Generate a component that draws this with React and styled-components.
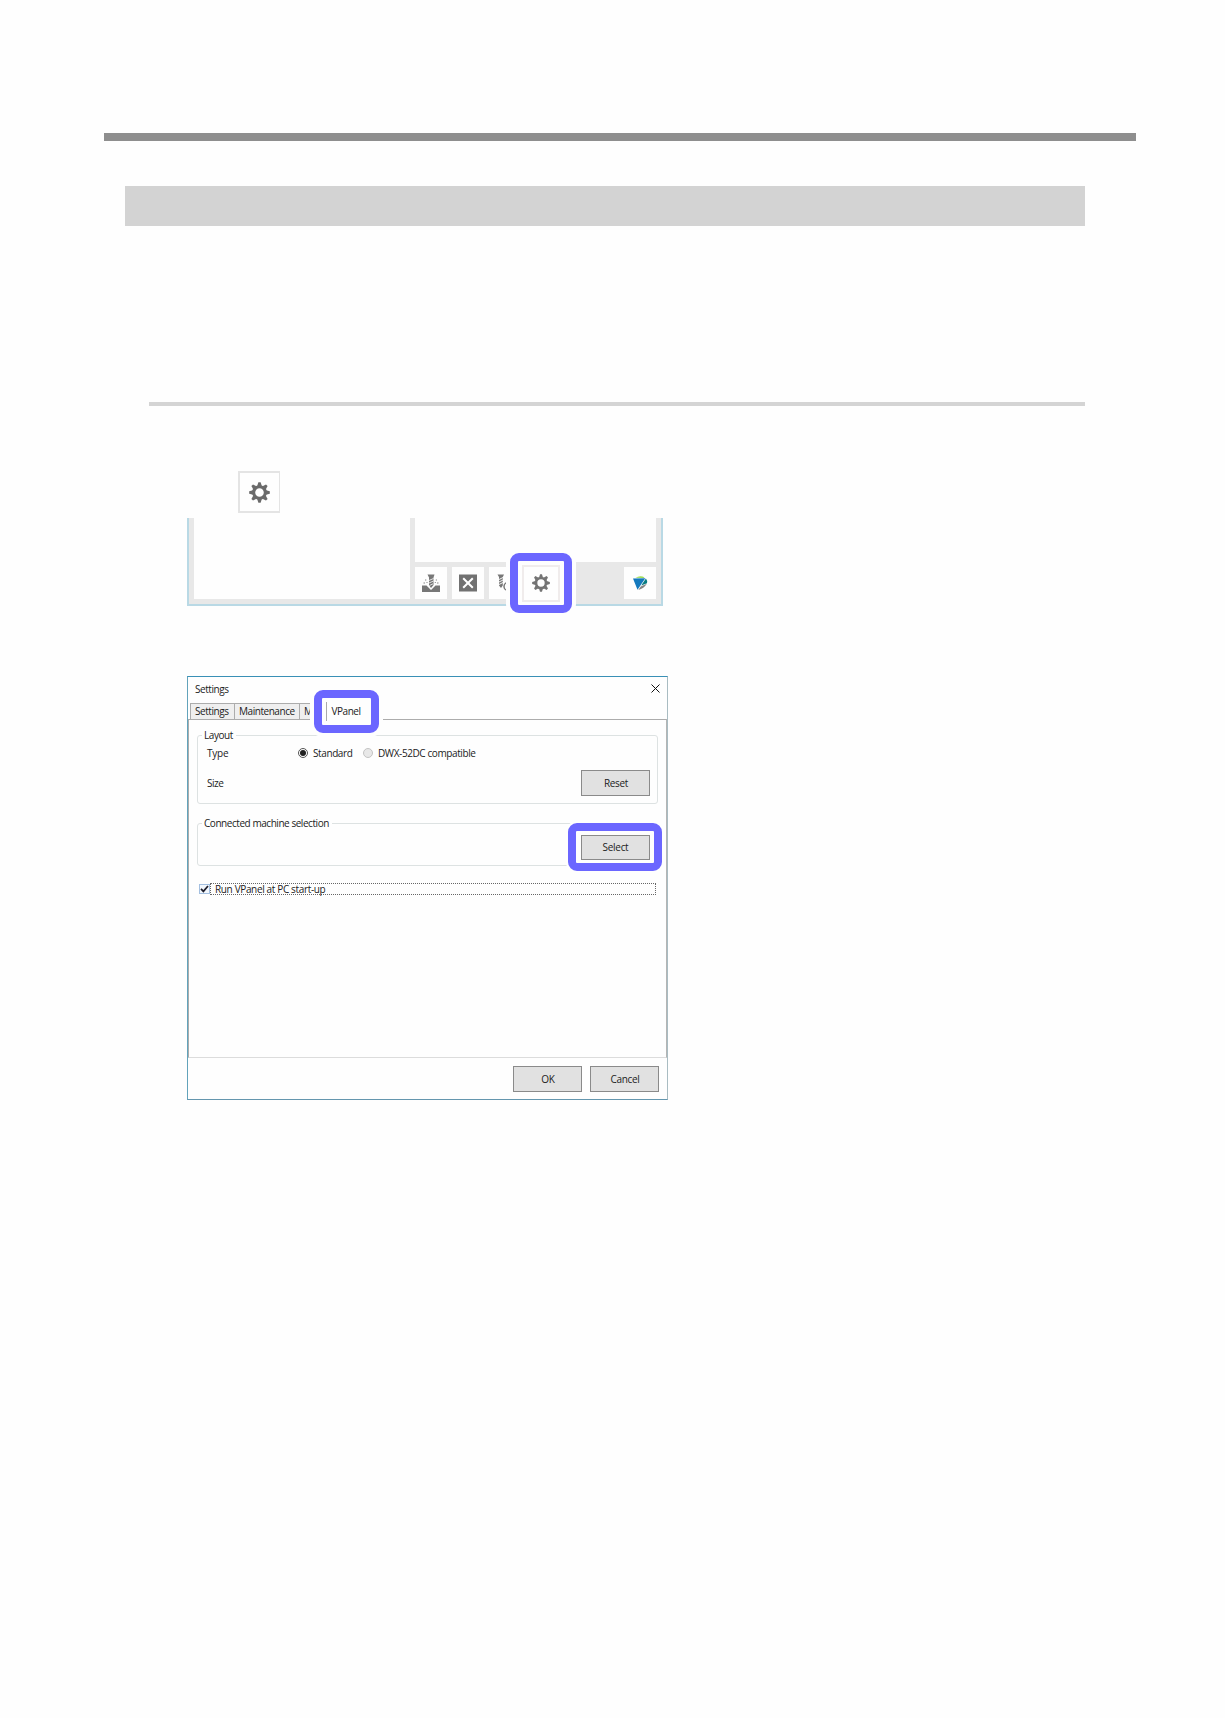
import React, { useState } from 'react';
import styled, { createGlobalStyle } from 'styled-components'

const GlobalStyle = createGlobalStyle`
    * {
        box-sizing: border-box;
    }
    body {
        margin: 0;
        background-color: #fefefe;
    }
`

const Page = styled.main`
    width: 1225px;
    height: 1718px;
    padding: 133px 89px 0 104px;
    font-family: "Open Sans", "Noto Sans", sans-serif;
    font-size: 10px;
    line-height: 14px;
    letter-spacing: -0.45px;
    color: #222;
`
const HeaderRule = styled.div`
    height: 8px;
    background-color: #8e8e8e;
`
const Article = styled.div`
    padding: 45px 51px 0 21px;
`
const Heading = styled.div`
    height: 40px;
    background-color: #d3d3d3;
`
const SectionRule = styled.div`
    height: 4px;
    margin: 176px 0 0 24px;
    background-color: #d4d4d4;
`
const Steps = styled.div`
    display: flex;
    flex-direction: column;
    align-items: flex-start;
    padding: 65px 0 0 62px;
`
const GearTile = styled.div`
    display: flex;
    align-items: center;
    justify-content: center;
    width: 42px;
    height: 42px;
    margin: 0 0 5px 51px;
    border: 2px solid #e4e4e4;
    border-right-width: 1px;
    background-color: #fefefe;
`

/* machine panel */
const Machine = styled.div`
    position: relative;
    display: flex;
    gap: 5px;
    width: 476px;
    height: 88px;
    margin-bottom: 70px;
    padding: 0 5px 5px;
    background-color: #e8e8e8;
    border: 2px solid #b9d9e5;
    border-top: none;
`
const MachineList = styled.div`
    width: 216px;
    background-color: #fefefe;
`
const MachineRight = styled.div`
    flex: 1;
    display: flex;
    flex-direction: column;
    gap: 5px;
`
const MachineView = styled.div`
    height: 44px;
    background-color: #fefefe;
`
const Toolbar = styled.div`
    display: flex;
    gap: 5px;
    height: 32px;
`
const Tool = styled.div`
    display: flex;
    align-items: center;
    justify-content: center;
    width: 32px;
    height: 32px;
    margin-left: ${(props) => (props.$last ? 'auto' : 0)};
    background-color: #fefefe;
`

/* coloured frame with a white gap around it, lies over the screens */
const Highlight = styled.div`
    position: absolute;
    left: ${(props) => props.$x}px;
    top: ${(props) => props.$y}px;
    width: ${(props) => props.$w}px;
    height: ${(props) => props.$h}px;
    display: flex;
    align-items: center;
    justify-content: center;
    border: 8px solid #6b66ff;
    border-radius: 9px;
    background-color: #fefefe;
    box-shadow: 0 0 0 ${(props) => props.$gap ?? 4}px #fefefe;
`
const ActiveTool = styled.div`
    display: flex;
    align-items: center;
    justify-content: center;
    width: 38px;
    height: 37px;
    border: 2px solid #f0ecec;
`

/* settings window */
const Window = styled.div`
    position: relative;
    display: flex;
    flex-direction: column;
    width: 481px;
    height: 424px;
    border: 1px solid #62a3bb;
    border-top-color: #3990b6;
    border-bottom-color: #6496ae;
    border-right-color: #a9bcc2;
    background-color: #fefefe;
`
const TitleBar = styled.div`
    display: flex;
    justify-content: space-between;
    height: 26px;
    padding: 5px 7px 0;

    svg {
        margin-top: 2px;
    }
`
const Tabs = styled.div`
    display: flex;
    height: 16px;
    padding-left: 2px;
`
const Tab = styled.div`
    width: ${(props) => props.$w}px;
    padding-left: 4px;
    border: 1px solid #acacac;
    border-bottom: none;
    border-left-width: ${(props) => (props.$first ? 1 : 0)}px;
    background-color: #efefef;
    line-height: 15px;
    overflow: hidden;
`
const ActiveTab = styled.div`
    width: 45px;
    height: 19px;
    margin-left: 3px;
    padding: 2px 0 0 5px;
    border-left: 1px solid #aaa;
`
const TabPane = styled.div`
    flex: 1;
    padding: 15px 8px 0 8px;
    border: 1px solid #acacac;
    border-right: 1px solid #b5b5b5;
    border-bottom-color: #dcdcdc;
`
const Group = styled.div`
    display: flex;
    flex-direction: column;
    height: ${(props) => props.$h}px;
    margin-bottom: ${(props) => props.$after}px;
    padding: 0 7px 0 9px;
    border: 1px solid #dde2e2;
    border-radius: 3px;
`
const Legend = styled.div`
    align-self: flex-start;
    height: 14px;
    margin: -8px 0 0 -5px;
    padding: 0 3px 0 2px;
    background-color: #fefefe;
`
const Row = styled.div`
    display: flex;
    align-items: center;
    justify-content: space-between;
    height: ${(props) => props.$h}px;
    margin-top: ${(props) => props.$top || 0}px;
`
const Radios = styled.div`
    display: flex;
    flex: 1;
    padding-left: 72px;
    letter-spacing: -0.4px;
`
const RadioLabel = styled.label`
    display: flex;
    align-items: center;
    gap: 5px;
    width: ${(props) => props.$w}px;
    white-space: nowrap;
`
const Dot = styled.span`
    display: flex;
    align-items: center;
    justify-content: center;
    width: 10px;
    height: 10px;
    border: 1px solid ${(props) => (props.$on ? '#555' : '#c4c4c4')};
    border-radius: 50%;
    background-color: ${(props) => (props.$on ? '#fff' : '#e8e8e8')};

    &::after {
        content: "";
        width: 6px;
        height: 6px;
        border-radius: 50%;
        background-color: ${(props) => (props.$on ? '#222' : 'transparent')};
    }
`
const TypeName = styled.span`
    width: 19px;
    letter-spacing: -0.2px;
`
const Button = styled.button`
    width: 69px;
    height: ${(props) => props.$h || 26}px;
    padding: 0 0 0 1px;
    border: 1px solid #8a8a8a;
    background-color: #e1e1e1;
    color: #222;
    font: inherit;
    letter-spacing: -0.3px;
`
const CheckRow = styled.div`
    display: flex;
    align-items: center;
    height: 13px;
    margin: 0 2px;
`
const Check = styled.span`
    display: flex;
    justify-content: flex-end;
    width: 11px;
    height: 10px;
    border: 1px solid #a3bfe0;
    background-color: #f2f7fd;
`
const Focus = styled.span`
    flex: 1;
    height: 12px;
    padding-left: 4px;
    border: 1px dotted #666;
    line-height: 11px;
    letter-spacing: -0.35px;
`
const Footer = styled.div`
    display: flex;
    justify-content: flex-end;
    gap: 8px;
    height: 41px;
    padding: 8px 8px 0 0;
`

const Gear = ({ size, color }) => (
  <svg width={size} height={size} viewBox="-11 -11 22 22">
    <circle r="6.1" fill="none" stroke={color} strokeWidth="3.2" />
    {[0, 45, 90, 135, 180, 225, 270, 315].map((angle) => (
      <path key={angle} d="M-2.4-6.8L-1.2-10.8H1.2L2.4-6.8Z" fill={color} transform={`rotate(${angle})`} />
    ))}
  </svg>
)

const MillIcon = () => (
  <svg width="18" height="18" viewBox="0 0 18 18">
    <path d="M0 11.5H4.5L9 16L13.5 11.5H18V18H0Z" fill="#777" />
    <path d="M5.5 0.5H12.5L11.5 3.5V11L9 14L7 11V3.5Z" fill="#777" />
    <path d="M7 6.5L11.5 4.5M7 9L11.5 7M7.5 11.5L11 9.8" stroke="#fff" strokeWidth="0.8" />
    <path d="M3 6H4.3M1.5 9H3M4.5 8.5H5.5M13.8 6H15M12.8 8.5H13.8M15 9H16.5" stroke="#888" strokeWidth="1.2" />
  </svg>
)

const CloseBoxIcon = () => (
  <svg width="18" height="18" viewBox="0 0 18 18">
    <path d="M0 0.5H18V17.5H0Z" fill="#717171" />
    <path d="M4.2 4.2L13.8 13.8M13.8 4.2L4.2 13.8" stroke="#fff" strokeWidth="2" />
  </svg>
)

const DrillIcon = () => (
  <svg width="18" height="18" viewBox="0 0 18 18">
    <path d="M1.5 0.5H8L6.8 3V11.5L5 14L3 11.5V3Z" fill="#777" />
    <path d="M3 5.5L7 3.5M3 8L7 6M3 10.5L7 8.5" stroke="#fff" strokeWidth="0.9" />
    <circle cx="12" cy="12.5" r="4" fill="none" stroke="#777" strokeWidth="1.5" />
  </svg>
)

const LogoIcon = () => (
  <svg width="16" height="16" viewBox="0 0 16 16">
    <path d="M3.5 2.8Q8-0.2 12.5 2.3L11.5 3Z" fill="#9bdc55" />
    <path d="M1 3.5L13.3 3.2L5.5 14.8Z" fill="#1479bd" />
    <path d="M13.9 3.6Q15.8 6 15 8.2L9.2 10.5Z" fill="#087c83" />
    <path d="M14.8 8.8Q12 13.6 6.3 15L8.7 11.4Z" fill="#848484" />
  </svg>
)

const CloseIcon = () => (
  <svg width="9" height="9" viewBox="0 0 9 9">
    <path d="M0.5 0.5L8.5 8.5M8.5 0.5L0.5 8.5" stroke="#111" strokeWidth="1" />
  </svg>
)

const CheckIcon = () => (
  <svg width="9" height="8" viewBox="0 0 9 8">
    <path d="M1 3.8L3.4 6.4L8 1" fill="none" stroke="#1d1d2b" strokeWidth="1.7" />
  </svg>
)

const MachinePanel = () => (
  <Machine>
    <MachineList />
    <MachineRight>
      <MachineView />
      <Toolbar>
        <Tool><MillIcon /></Tool>
        <Tool><CloseBoxIcon /></Tool>
        <Tool><DrillIcon /></Tool>
        <Tool $last><LogoIcon /></Tool>
      </Toolbar>
    </MachineRight>
    <Highlight $x={321} $y={35} $w={62} $h={60}>
      <ActiveTool><Gear size={18} color="#747474" /></ActiveTool>
    </Highlight>
  </Machine>
)

const SettingsWindow = () => {
  const [type, setType] = useState('standard')

  return (
    <Window>
      <TitleBar>
        <span>Settings</span>
        <CloseIcon />
      </TitleBar>
      <Tabs>
        <Tab $first $w={45}>Settings</Tab>
        <Tab $w={65}>Maintenance</Tab>
        <Tab $w={30}>M</Tab>
      </Tabs>
      <TabPane>
        <Group $h={69} $after={19}>
          <Legend>Layout</Legend>
          <Row $h={14} $top={4}>
            <TypeName>Type</TypeName>
            <Radios>
              <RadioLabel $w={65} onClick={() => setType('standard')}>
                <Dot $on={type === 'standard'} />Standard
              </RadioLabel>
              <RadioLabel $w={130} onClick={() => setType('compatible')}>
                <Dot $on={type === 'compatible'} />DWX-52DC compatible
              </RadioLabel>
            </Radios>
          </Row>
          <Row $h={26} $top={10}>
            <span>Size</span>
            <Button>Reset</Button>
          </Row>
        </Group>
        <Group $h={43} $after={16}>
          <Legend>Connected machine selection</Legend>
        </Group>
        <CheckRow>
          <Check><CheckIcon /></Check>
          <Focus>Run VPanel at PC start-up</Focus>
        </CheckRow>
      </TabPane>
      <Footer>
        <Button>OK</Button>
        <Button>Cancel</Button>
      </Footer>
      <Highlight $x={126} $y={13} $w={65} $h={43}>
        <ActiveTab>VPanel</ActiveTab>
      </Highlight>
      <Highlight $x={380} $y={146} $w={94} $h={48} $gap={2}>
        <Button $h={25}>Select</Button>
      </Highlight>
    </Window>
  )
}

const App = () => {
  return (
    <Page>
      <GlobalStyle />
      <HeaderRule />
      <Article>
        <Heading />
        <SectionRule />
        <Steps>
          <GearTile><Gear size={21} color="#6a6a6a" /></GearTile>
          <MachinePanel />
          <SettingsWindow />
        </Steps>
      </Article>
    </Page>
  );
};

export default App;
